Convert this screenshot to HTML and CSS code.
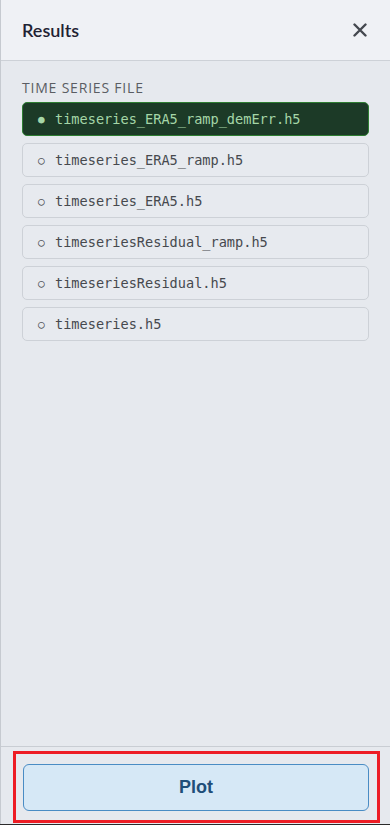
FILE: index.html
```html
<!DOCTYPE html>
<html>
<head>
<meta charset="utf-8">
<link rel="stylesheet" href="styles.css">
</head>
<body>
<div class="panel">
  <header class="head">
    <h1 class="title">Results</h1>
    <button class="close" aria-label="Close">
      <svg width="14" height="14" viewBox="0 0 14 14"><path d="M1.5 1.5 L12.5 12.5 M12.5 1.5 L1.5 12.5" stroke="#44484f" stroke-width="2.4" stroke-linecap="round"/></svg>
    </button>
  </header>
  <main class="body">
    <div class="label">TIME SERIES FILE</div>
    <ul class="files">
      <li class="file sel"><span class="dot">●</span>timeseries_ERA5_ramp_demErr.h5</li>
      <li class="file"><span class="dot">○</span>timeseries_ERA5_ramp.h5</li>
      <li class="file"><span class="dot">○</span>timeseries_ERA5.h5</li>
      <li class="file"><span class="dot">○</span>timeseriesResidual_ramp.h5</li>
      <li class="file"><span class="dot">○</span>timeseriesResidual.h5</li>
      <li class="file"><span class="dot">○</span>timeseries.h5</li>
    </ul>
  </main>
  <footer class="foot">
    <div class="foot-inner">
      <button class="plot">Plot</button>
    </div>
  </footer>
</div>
</body>
</html>
```
FILE: styles.css
```css
* { box-sizing: border-box; }
html, body { margin: 0; padding: 0; }
body {
  width: 390px;
  height: 825px;
  font-family: Lato, "Open Sans", sans-serif;
  background: #e6e9ee;
  border-bottom: 1px solid #2b2b2b;
}
.panel {
  height: 824px;
  display: flex;
  flex-direction: column;
  border-left: 1px solid #c6cad0;
  background: #e6e9ee;
}
.head {
  height: 61px;
  flex: none;
  display: flex;
  align-items: center;
  justify-content: space-between;
  padding: 0 22px 0 21px;
  background: #eff1f5;
  border-bottom: 1px solid #cdd1d7;
}
.title {
  margin: 0;
  font-size: 18px;
  font-weight: 600;
  color: #1f2233;
}
.close {
  border: none;
  background: none;
  padding: 0;
  width: 14px;
  height: 14px;
  display: flex;
  margin-right: 1px;
}
.body {
  flex: 1;
  padding: 17px 21px 0 21px;
}
.label {
  font-family: "Open Sans", sans-serif;
  font-size: 14px;
  letter-spacing: 0.8px;
  color: #5a5d63;
  line-height: 19px;
  margin-bottom: 5px;
}
.files {
  list-style: none;
  margin: 0;
  padding: 0;
  display: flex;
  flex-direction: column;
  gap: 7px;
}
.file {
  height: 34px;
  display: flex;
  align-items: center;
  padding-left: 15px;
  border: 1px solid #cdd1d7;
  border-radius: 5px;
  background: #e7eaef;
  font-family: "DejaVu Sans Mono", monospace;
  font-size: 13.6px;
  color: #46494e;
}
.file.sel {
  background: #1c3a27;
  border-color: #2e7d32;
  color: #a5d6a7;
}
.dot {
  font-size: 11px;
  width: 17px;
  display: inline-block;
}
.foot {
  flex: none;
  border-top: 1px solid #c9cdd3;
  padding: 4px 10px 1px 12px;
}
.foot-inner {
  border: 3px solid #ed1c24;
  padding: 10px 8px 9px 7px;
}
.plot {
  width: 100%;
  height: 47px;
  border: 1px solid #4a8cc4;
  border-radius: 6px;
  background: #d6e8f6;
  color: #1f4e79;
  font-family: "Liberation Sans", Arial, sans-serif;
  font-weight: bold;
  font-size: 18px;
  cursor: pointer;
}
```
